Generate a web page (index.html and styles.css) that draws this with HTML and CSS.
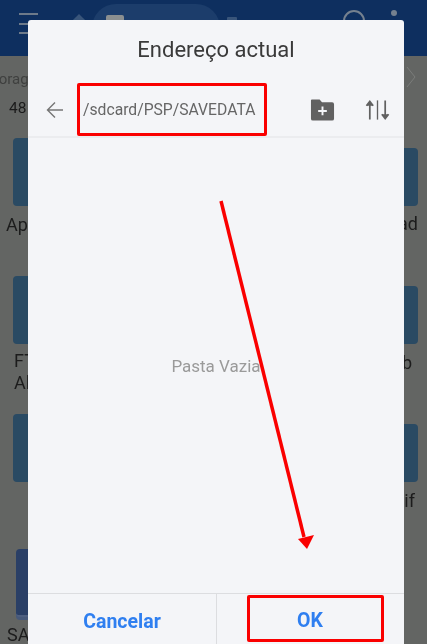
FILE: index.html
```html
<!DOCTYPE html>
<html lang="pt">
<head>
<meta charset="utf-8">
<title>Endereço actual</title>
<link rel="stylesheet" href="styles.css">
</head>
<body>
<div class="screen">
  <header class="appbar">
    <div class="burger"><i></i><i></i><i></i></div>
    <div class="home-mark"></div>
    <div class="tab"><span class="tab-icon"></span></div>
    <div class="tab-extra"></div>
    <div class="appbar-space"></div>
    <div class="search"></div>
    <div class="dot"></div>
  </header>
  <div class="crumbs">
    <span class="crumb-text">Storage</span>
    <svg class="crumb-chevron" width="10" height="22" viewBox="0 0 10 22"><path d="M1 1l8 10-8 10" fill="none" stroke="#7b7d7b" stroke-width="1"/></svg>
  </div>
  <div class="count">48</div>
  <main class="files">
    <div class="file-row">
      <div class="file"><div class="thumb"></div><div class="name">Ap</div></div>
      <div class="file file-end"><div class="thumb thumb-short"></div><div class="name">ad</div></div>
    </div>
    <div class="file-row">
      <div class="file"><div class="thumb"></div><div class="name name-in">FT<br>Al</div></div>
      <div class="file file-end"><div class="thumb thumb-short"></div><div class="name name-b">b</div></div>
    </div>
    <div class="file-row">
      <div class="file"><div class="thumb"></div></div>
      <div class="file file-end"><div class="thumb thumb-short"></div><div class="name name-if">if</div></div>
    </div>
    <div class="file-row file-row-last">
      <div class="file file-save"><div class="thumb thumb-save"></div><div class="name">SA</div></div>
    </div>
  </main>

  <section class="dialog">
    <h1 class="dialog-title">Endereço actual</h1>
    <div class="pathbar">
      <svg class="back" width="18" height="18" viewBox="0 0 18 18"><path d="M17 9H2M9 1.500L1.500 9 9 16.500" fill="none" stroke="#757575" stroke-width="1.400"/></svg>
      <div class="path mark">/sdcard/PSP/SAVEDATA</div>
      <svg class="newfolder" width="25" height="23" viewBox="0 0 26 23"><path d="M2 1h8l2.500 3H23a2 2 0 0 1 2 2v15a2 2 0 0 1-2 2H3a2 2 0 0 1-2-2V2a1 1 0 0 1 1-1z" fill="#616161"/><path d="M13 8.500v9M8.500 13h9" stroke="#f4f5f8" stroke-width="2"/></svg>
      <svg class="sort" width="25" height="22" viewBox="0 0 26 22"><path d="M5 21V3M1.500 6.500L5 2l3.500 4.500" fill="#616161" stroke="#616161" stroke-width="1.800"/><path d="M13 1v20" stroke="#616161" stroke-width="1.400"/><path d="M21 1v18M17.500 15.500L21 20l3.500-4.500" fill="#616161" stroke="#616161" stroke-width="1.800"/></svg>
    </div>
    <div class="dialog-body">Pasta Vazia</div>
    <div class="dialog-actions">
      <button class="action action-cancel">Cancelar</button>
      <button class="action action-ok"><span class="ok-mark">OK</span></button>
    </div>
  </section>

  <svg class="arrow" width="427" height="644" viewBox="0 0 427 644"><path d="M221 201L304 537" stroke="#fa0000" stroke-width="3.500" fill="none"/><path d="M298 539l16-4-7 14z" fill="#fa0000"/></svg>
</div>
</body>
</html>
```
FILE: styles.css
```css
* { box-sizing: border-box; }
html, body { margin: 0; padding: 0; }
body { font-family: Roboto, "Liberation Sans", sans-serif; background: #636563; }
.screen {
  position: relative;
  width: 427px;
  height: 644px;
  overflow: hidden;
  background: #636563;
  filter: blur(0.45px);
}
.appbar {
  display: flex;
  align-items: flex-start;
  height: 56px;
  background: #0e2f5f;
  padding: 4px 0 0 19px;
}
.burger { display: flex; flex-direction: column; gap: 7.500px; width: 19px; margin-top: 9px; }
.burger i { display: block; height: 2px; background: #6d7a8a; }
.home-mark {
  width: 10px; height: 10px; margin: 12px 0 0 36px;
  background: #39557a; transform: rotate(45deg);
}
.tab {
  width: 128px; height: 52px; margin-left: 8px;
  background: #1c3d6b; border-radius: 24px;
  padding: 11px 0 0 14px;
}
.tab-icon { display: block; width: 18px; height: 12px; background: #8b8f90; border-radius: 2px; }
.tab-extra { width: 10px; height: 10px; margin: 13px 0 0 7px; background: #39557a; border-radius: 1px; }
.appbar-space { flex: 1; }
.search {
  width: 22px; height: 22px; margin: 6px 26px 0 0;
  border: 2px solid #75818f; border-radius: 50%;
}
.dot { width: 6px; height: 6px; margin: 6px 30px 0 0; background: #75818f; border-radius: 50%; }
.crumbs {
  display: flex;
  align-items: center;
  justify-content: space-between;
  height: 36px;
  padding: 6px 11px 0 0;
  overflow: hidden;
}
.crumb-text { margin: 3px 0 0 -15px; font-size: 15px; color: #3f403f; }
.crumb-chevron { flex: none; margin-top: -1px; }
.count { height: 30px; padding: 6px 0 0 9px; font-size: 15.500px; line-height: 20px; color: #1b1b1b; }
.files { padding: 16px 9px 0 13px; }
.file-row {
  display: flex;
  justify-content: space-between;
  align-items: flex-start;
  height: 138px;
}
.file-row-last { height: 100px; margin-top: -3px; }
.file { width: 60px; }
.file-end { display: flex; flex-direction: column; align-items: flex-end; padding-top: 10px; }
.thumb { width: 60px; height: 68px; background: #2a4a63; border-radius: 4px; }
.thumb-short { height: 58px; }
.thumb-save {
  width: 60px; height: 68px; background: #2a3f66;
  border-bottom: 2px solid #4e5f80;
  box-shadow: 0 3px 0 #47597a;
}
.file-save { margin-left: 3px; }
.name { margin: 8px 0 0 -7px; font-size: 18px; line-height: 22px; color: #1c1c1c; }
.name-in { margin: 6px 0 0 1px; }
.file-end .name { margin: 7px 0 0; align-self: flex-end; }
.file-end .name-b { margin: 8px 6px 0 0; }
.file-end .name-if { margin: 8px 3px 0 0; }
.file-save .name { margin: 7px 0 0 -9px; }

.dialog {
  position: absolute;
  left: 28px;
  top: 20px;
  width: 376px;
  height: 624px;
  display: flex;
  flex-direction: column;
  background: #f4f5f8;
  border-radius: 3px 3px 0 0;
}
.dialog-title {
  margin: 0;
  height: 60px;
  padding-top: 17px;
  text-align: center;
  font-size: 22px;
  line-height: 26px;
  font-weight: 400;
  color: #3a3a3a;
}
.pathbar {
  display: flex;
  align-items: center;
  height: 58px;
  padding: 3px 0 0 18px;
  border-bottom: 2px solid #ebecef;
}
.back { flex: none; }
.path {
  width: 190px;
  height: 53px;
  margin: 0 0 0 13px;
  padding-left: 3px;
  line-height: 47px;
  font-size: 15.700px;
  color: #666;
  white-space: nowrap;
}
.mark { border: 3px solid #fa0000; border-radius: 2px; }
.newfolder { flex: none; margin-left: 43px; }
.sort { flex: none; margin-left: 30px; }
.dialog-body {
  flex: 1;
  display: flex;
  align-items: center;
  justify-content: center;
  font-size: 17px;
  color: #9a9a9a;
  padding-top: 1px;
}
.dialog-actions {
  display: flex;
  height: 51px;
  border-top: 1px solid #dcdde0;
}
.action {
  flex: none;
  width: 188px;
  border: 0;
  padding: 0;
  background: none;
  font-family: inherit;
  font-size: 19.500px;
  font-weight: 700;
  color: #2f7ff0;
}
.action-cancel { padding: 5px 0 0 0; }
.action-ok {
  border-left: 1px solid #dcdde0;
  padding: 1px 0 2px 30px;
  display: flex;
}
.ok-mark {
  display: flex;
  align-items: center;
  justify-content: center;
  width: 137px;
  height: 47px;
  padding: 3px 11px 0 0;
  border: 3px solid #fa0000;
  border-radius: 2px;
}
.arrow { position: absolute; left: 0; top: 0; pointer-events: none; }
```
